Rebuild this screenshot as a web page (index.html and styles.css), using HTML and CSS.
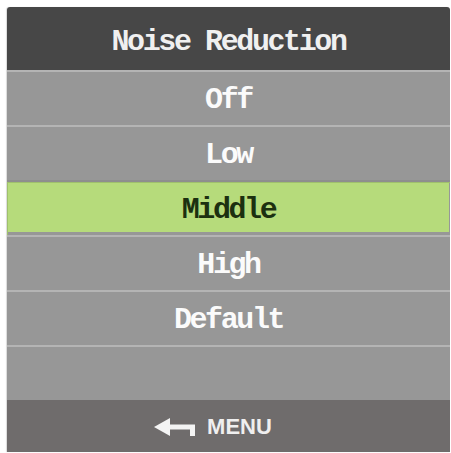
FILE: index.html
```html
<!DOCTYPE html>
<html lang="en">
<head>
  <meta charset="UTF-8" />
  <meta name="viewport" content="width=device-width, initial-scale=1.0" />
  <title>Noise Reduction</title>
  <link rel="stylesheet" href="styles.css">
</head>
<body>

  <div class="osd-menu">
    <div class="osd-title">Noise Reduction</div>

    <ul class="osd-list">
      <li class="osd-item">Off</li>
      <li class="osd-item">Low</li>
      <li class="osd-item active">Middle</li>
      <li class="osd-item">High</li>
      <li class="osd-item">Default</li>
      <li class="osd-item"></li>
    </ul>

    <div class="osd-footer">
      <!-- return arrow -->
      <svg class="back-icon" width="41" height="19" viewBox="0 0 41 19">
        <polygon points="0,9 16,0 16,18" fill="#f4f4f4" />
        <path d="M15 9 H38.5 V18" fill="none" stroke="#f4f4f4" stroke-width="5" />
      </svg>
      <span class="menu-label">MENU</span>
    </div>
  </div>

</body>
</html>
```

FILE: styles.css
```css
body {
  margin: 0;
  padding: 7px 1px 1px 7px;
  background: #fff;
}

.osd-menu {
  width: 443px;
  height: 445px;
  display: flex;
  flex-direction: column;
  border-radius: 3px 3px 0 0;
  overflow: hidden;
  box-shadow: -1px 0 1px rgba(0, 0, 0, 0.15);
  font-family: 'Liberation Mono', 'DejaVu Sans Mono', monospace;
  font-weight: bold;
}

.osd-title {
  height: 63px;
  flex-shrink: 0;
  background: #474747;
  color: #f0f0f0;
  display: flex;
  align-items: center;
  justify-content: center;
  font-size: 30px;
  letter-spacing: -2.4px;
  padding-top: 6px;
  box-sizing: border-box;
}

.osd-list {
  list-style: none;
  margin: 0;
  padding: 0;
}

.osd-item {
  height: 55px;
  box-sizing: border-box;
  border-top: 2px solid #b4b4b4;
  padding-top: 3px;
  background: #979797;
  color: #fbfbfb;
  display: flex;
  align-items: center;
  justify-content: center;
  font-size: 30px;
  letter-spacing: -2.4px;
}

.osd-item.active {
  border-top-color: #8e8e8e;
  background: #b6db7b;
  color: #1c3010;
  box-shadow: inset 1px 1px 0 #9fc06c, inset -1px -3px 0 #979797;
}

.osd-footer {
  flex: 1;
  background: #6f6c6c;
  display: flex;
  align-items: center;
  justify-content: center;
  gap: 12px;
  padding-right: 31px;
  padding-top: 2px;
}

.back-icon {
  display: block;
  margin-top: 1px;
}

.menu-label {
  font-family: 'Liberation Sans', Arial, sans-serif;
  font-size: 22px;
  color: #efefef;
}
```
